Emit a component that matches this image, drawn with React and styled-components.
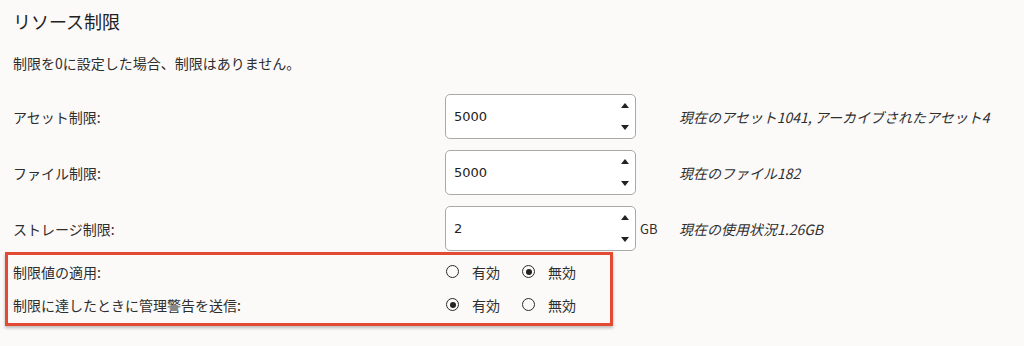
import React from 'react'
import styled, { createGlobalStyle } from 'styled-components';

const GlobalStyle = createGlobalStyle`
  body {
    margin: 0;
    background: #fbfaf9;
    font-family: "Noto Sans CJK JP", "Noto Sans", sans-serif;
    color: #2e2e2e;
  }
`;

const Page = styled.div`
  width: 1024px;
  height: 346px;
  padding: 0 0 0 5px;
  box-sizing: border-box;
  overflow: hidden;
`;

const Title = styled.h2`
  margin: 0;
  padding: 9px 0 0 8px;
  font-size: 18px;
  font-weight: 400;
  line-height: 24px;
  color: #222;
`;

const Note = styled.p`
  margin: 0;
  padding: 20px 0 0 8px;
  font-size: 14px;
  line-height: 20px;
`;

const LimitGrid = styled.div`
  display: grid;
  grid-template-columns: 432px 191px 43px auto;
  row-gap: 11px;
  align-items: center;
  padding: 21px 0 0 8px;
`;

const Label = styled.div`
  font-size: 14px;
`;

const NumberBox = styled.div`
  height: 45px;
  box-sizing: border-box;
  border: 1px solid #a9a9a9;
  border-radius: 5px;
  background: #fff;
  display: flex;
  align-items: center;
  justify-content: space-between;
  padding: 0 6px 0 8px;
  font-family: "DejaVu Sans", sans-serif;
  font-size: 13px;
  color: #222;
`;

const Spinner = styled.div`
  display: flex;
  flex-direction: column;
  justify-content: space-between;
  height: 27px;
`;

const Unit = styled.div`
  font-size: 13px;
  padding-left: 4px;
`;

const Usage = styled.div`
  font-size: 14px;
  font-style: italic;
`;

const Highlight = styled.div`
  margin-top: 1px;
  width: 608px;
  height: 74px;
  box-sizing: border-box;
  border: 3px solid #e34a33;
  box-shadow: 0 2px 3px rgba(0, 0, 0, 0.25);
  padding: 0 0 0 5px;
`;

const ToggleRow = styled.div`
  display: grid;
  grid-template-columns: 433px auto;
  align-items: center;
  height: 33px;
  font-size: 14px;
`;

const Options = styled.div`
  display: flex;
  align-items: center;
`;

const Option = styled.label`
  display: flex;
  align-items: center;
  gap: 13px;
  margin-right: ${p => (p.first ? '22px' : '0')};
`;

const Radio = styled.span`
  width: 13px;
  height: 13px;
  box-sizing: border-box;
  border: 1.3px solid #2a2a2a;
  border-radius: 50%;
  display: flex;
  align-items: center;
  justify-content: center;
  &::after {
    content: '';
    width: 6px;
    height: 6px;
    border-radius: 50%;
    background: ${p => (p.checked ? '#222' : 'transparent')};
  }
`;

const Arrow = ({ down }) => (
  <svg width="8" height="5" viewBox="0 0 8 5">
    <path d={down ? 'M0 0H8L4 5Z' : 'M0 5H8L4 0Z'} fill="#222" />
  </svg>
);

const limits = [
  { label: 'アセット制限:', value: '5000', unit: '', usage: '現在のアセット1041, アーカイブされたアセット4' },
  { label: 'ファイル制限:', value: '5000', unit: '', usage: '現在のファイル182' },
  { label: 'ストレージ制限:', value: '2', unit: 'GB', usage: '現在の使用状況1.26GB' },
];

const toggles = [
  { label: '制限値の適用:', on: false },
  { label: '制限に達したときに管理警告を送信:', on: true },
];

function App() {
  return (
    <Page>
      <GlobalStyle />
      <Title>リソース制限</Title>
      <Note>制限を0に設定した場合、制限はありません。</Note>
      <LimitGrid>
        {limits.map((l, i) => (
          <React.Fragment key={i}>
            <Label>{l.label}</Label>
            <NumberBox>
              <span>{l.value}</span>
              <Spinner>
                <Arrow />
                <Arrow down />
              </Spinner>
            </NumberBox>
            <Unit>{l.unit}</Unit>
            <Usage>{l.usage}</Usage>
          </React.Fragment>
        ))}
      </LimitGrid>
      <Highlight>
        {toggles.map((t, i) => (
          <ToggleRow key={i}>
            <span>{t.label}</span>
            <Options>
              <Option first>
                <Radio checked={t.on} />
                有効
              </Option>
              <Option>
                <Radio checked={!t.on} />
                無効
              </Option>
            </Options>
          </ToggleRow>
        ))}
      </Highlight>
    </Page>
  )
}

export default App
